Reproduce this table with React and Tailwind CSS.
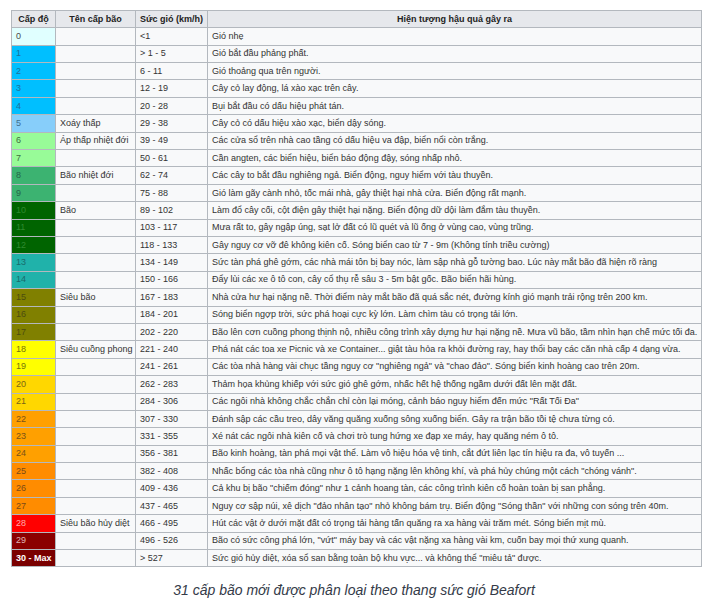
import React from "react";

const rows = [
  { lv: "0", bg: "bg-[#e0ffff]", fg: "text-[#4a4a4a]", name: "", wind: "<1", desc: "Gió nhẹ" },
  { lv: "1", bg: "bg-[#00bfff]", fg: "text-[#1f6f9a]", name: "", wind: "> 1 - 5", desc: "Gió bắt đầu phảng phất." },
  { lv: "2", bg: "bg-[#00bfff]", fg: "text-[#1f6f9a]", name: "", wind: "6 - 11", desc: "Gió thoảng qua trên người." },
  { lv: "3", bg: "bg-[#00bfff]", fg: "text-[#1f6f9a]", name: "", wind: "12 - 19", desc: "Cây cỏ lay động, lá xào xạc trên cây." },
  { lv: "4", bg: "bg-[#00bfff]", fg: "text-[#1f6f9a]", name: "", wind: "20 - 28", desc: "Bụi bắt đầu có dấu hiệu phát tán." },
  { lv: "5", bg: "bg-[#87cefa]", fg: "text-[#3f6f8f]", name: "Xoáy thấp", wind: "29 - 38", desc: "Cây cỏ có dấu hiệu xào xạc, biển dậy sóng." },
  { lv: "6", bg: "bg-[#98fb98]", fg: "text-[#3f6f3f]", name: "Áp thấp nhiệt đới", wind: "39 - 49", desc: "Các cửa sổ trên nhà cao tầng có dấu hiệu va đập, biển nổi còn trắng." },
  { lv: "7", bg: "bg-[#98fb98]", fg: "text-[#3f6f3f]", name: "", wind: "50 - 61", desc: "Cần angten, các biển hiệu, biển báo động đậy, sóng nhấp nhô." },
  { lv: "8", bg: "bg-[#3cb371]", fg: "text-[#24664a]", name: "Bão nhiệt đới", wind: "62 - 74", desc: "Các cây to bắt đầu nghiêng ngả. Biển động, nguy hiểm với tàu thuyền." },
  { lv: "9", bg: "bg-[#3cb371]", fg: "text-[#24664a]", name: "", wind: "75 - 88", desc: "Gió làm gãy cành nhỏ, tốc mái nhà, gây thiệt hại nhà cửa. Biển động rất mạnh." },
  { lv: "10", bg: "bg-[#006400]", fg: "text-[#2f8a2f]", name: "Bão", wind: "89 - 102", desc: "Làm đổ cây cối, cột điện gây thiệt hại nặng. Biển động dữ dội làm đắm tàu thuyền." },
  { lv: "11", bg: "bg-[#006400]", fg: "text-[#2f8a2f]", name: "", wind: "103 - 117", desc: "Mưa rất to, gây ngập úng, sạt lở đất có lũ quét và lũ ống ở vùng cao, vùng trũng." },
  { lv: "12", bg: "bg-[#006400]", fg: "text-[#2f8a2f]", name: "", wind: "118 - 133", desc: "Gây nguy cơ vỡ đê không kiên cố. Sóng biển cao từ 7 - 9m (Không tính triều cường)" },
  { lv: "13", bg: "bg-[#20b2aa]", fg: "text-[#1a6a6a]", name: "", wind: "134 - 149", desc: "Sức tàn phá ghê gớm, các nhà mái tôn bị bay nóc, làm sập nhà gỗ tường bao. Lúc này mắt bão đã hiện rõ ràng" },
  { lv: "14", bg: "bg-[#20b2aa]", fg: "text-[#1a6a6a]", name: "", wind: "150 - 166", desc: "Đẩy lùi các xe ô tô con, cây cổ thụ rễ sâu 3 - 5m bật gốc. Bão biển hãi hùng." },
  { lv: "15", bg: "bg-[#808000]", fg: "text-[#4c4c10]", name: "Siêu bão", wind: "167 - 183", desc: "Nhà cửa hư hại nặng nề. Thời điểm này mắt bão đã quá sắc nét, đường kính gió mạnh trải rộng trên 200 km." },
  { lv: "16", bg: "bg-[#808000]", fg: "text-[#4c4c10]", name: "", wind: "184 - 201", desc: "Sóng biển ngợp trời, sức phá hoại cực kỳ lớn. Làm chìm tàu có trọng tải lớn." },
  { lv: "17", bg: "bg-[#808000]", fg: "text-[#4c4c10]", name: "", wind: "202 - 220", desc: "Bão lên cơn cuồng phong thịnh nộ, nhiều công trình xây dựng hư hại nặng nề. Mưa vũ bão, tầm nhìn hạn chế mức tối đa." },
  { lv: "18", bg: "bg-[#ffff00]", fg: "text-[#75750a]", name: "Siêu cuồng phong", wind: "221 - 240", desc: "Phá nát các toa xe Picnic và xe Container... giật tàu hỏa ra khỏi đường ray, hay thổi bay các căn nhà cấp 4 dạng vừa." },
  { lv: "19", bg: "bg-[#ffff00]", fg: "text-[#75750a]", name: "", wind: "241 - 261", desc: "Các tòa nhà hàng vài chục tầng nguy cơ \"nghiêng ngả\" và \"chao đảo\". Sóng biển kinh hoàng cao trên 20m." },
  { lv: "20", bg: "bg-[#ffd700]", fg: "text-[#7a6515]", name: "", wind: "262 - 283", desc: "Thảm họa khủng khiếp với sức gió ghê gớm, nhấc hết hệ thống ngầm dưới đất lên mặt đất." },
  { lv: "21", bg: "bg-[#ffd700]", fg: "text-[#7a6515]", name: "", wind: "284 - 306", desc: "Các ngôi nhà không chắc chắn chỉ còn lại móng, cảnh báo nguy hiểm đến mức \"Rất Tối Đa\"" },
  { lv: "22", bg: "bg-[#ffa000]", fg: "text-[#7a5218]", name: "", wind: "307 - 330", desc: "Đánh sập các cầu treo, dây văng quăng xuống sông xuống biển. Gây ra trận bão tồi tệ chưa từng có." },
  { lv: "23", bg: "bg-[#ffa000]", fg: "text-[#7a5218]", name: "", wind: "331 - 355", desc: "Xé nát các ngôi nhà kiên cố và chơi trò tung hứng xe đạp xe máy, hay quăng ném ô tô." },
  { lv: "24", bg: "bg-[#ffa000]", fg: "text-[#7a5218]", name: "", wind: "356 - 381", desc: "Bão kinh hoàng, tàn phá mọi vật thể. Làm vô hiệu hóa vệ tinh, cắt đứt liên lạc tín hiệu ra đa, vô tuyến ..." },
  { lv: "25", bg: "bg-[#ff8c00]", fg: "text-[#7a4a18]", name: "", wind: "382 - 408", desc: "Nhấc bổng các tòa nhà cũng như ô tô hạng nặng lên không khí, và phá hủy chúng một cách \"chóng vánh\"." },
  { lv: "26", bg: "bg-[#ff8c00]", fg: "text-[#7a4a18]", name: "", wind: "409 - 436", desc: "Cả khu bị bão \"chiếm đóng\" như 1 cảnh hoang tàn, các công trình kiên cố hoàn toàn bị san phẳng." },
  { lv: "27", bg: "bg-[#ff8c00]", fg: "text-[#7a4a18]", name: "", wind: "437 - 465", desc: "Nguy cơ sập núi, xê dịch \"đảo nhân tạo\" nhỏ không bám trụ. Biển động \"Sóng thần\" với những con sóng trên 40m." },
  { lv: "28", bg: "bg-[#ff0000]", fg: "text-[#ffaaaa]", name: "Siêu bão hủy diệt", wind: "466 - 495", desc: "Hút các vật ở dưới mặt đất có trọng tải hàng tấn quăng ra xa hàng vài trăm mét. Sóng biển mịt mù." },
  { lv: "29", bg: "bg-[#8b0000]", fg: "text-[#e0b4b4]", name: "", wind: "496 - 526", desc: "Bão có sức công phá lớn, \"vứt\" máy bay và các vật nặng xa hàng vài km, cuốn bay mọi thứ xung quanh." },
  { lv: "30 - Max", bg: "bg-[#7a0000]", fg: "text-white font-bold", name: "", wind: "> 527", desc: "Sức gió hủy diệt, xóa sổ san bằng toàn bộ khu vực... và không thể \"miêu tả\" được." },
];

const cell = "border border-[#b3b8be] px-[4px] py-0 leading-[11px] whitespace-nowrap overflow-hidden";

export default function App() {
  return (
    <div className="w-[708px] h-[614px] bg-white pt-[10px] font-['Liberation_Sans',Arial,sans-serif]">
      <table className="ml-[11px] w-[691px] table-fixed border-collapse text-[9px] text-[#333]">
        <colgroup>
          <col className="w-[44px]" />
          <col className="w-[80px]" />
          <col className="w-[72px]" />
          <col />
        </colgroup>
        <thead>
          <tr className="h-[17.3px] bg-[#e6e8ec] text-[#222]">
            <th className={`${cell} font-bold text-center`}>Cấp độ</th>
            <th className={`${cell} font-bold text-center`}>Tên cấp bão</th>
            <th className={`${cell} font-bold text-center`}>Sức gió (km/h)</th>
            <th className={`${cell} font-bold text-center`}>Hiện tượng hậu quả gây ra</th>
          </tr>
        </thead>
        <tbody>
          {rows.map((r) => (
            <tr key={r.lv} className="h-[17.4px] bg-[#f8f9fa]">
              <td className={`${cell} ${r.bg} ${r.fg}`}>{r.lv}</td>
              <td className={cell}>{r.name}</td>
              <td className={cell}>{r.wind}</td>
              <td className={cell}>{r.desc}</td>
            </tr>
          ))}
        </tbody>
      </table>
      <p className="mt-[15px] text-center italic text-[14px] leading-[16px] text-[#333a48]">
        31 cấp bão mới được phân loại theo thang sức gió Beafort
      </p>
    </div>
  );
}
